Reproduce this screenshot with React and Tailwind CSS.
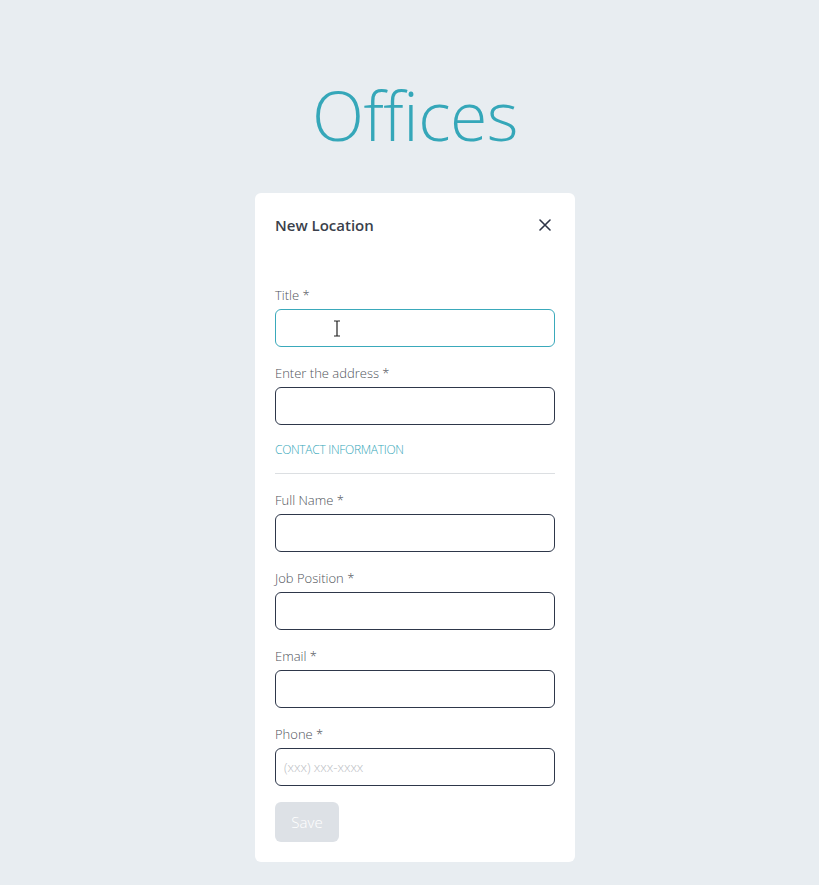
import React from 'react'

const font = { fontFamily: '"Open Sans", "Segoe UI", sans-serif' }

const Field = ({ label, placeholder, focused, children }) => (
  <div className="mb-[17px]">
    <label className="block text-[13px] leading-[18px] font-light text-[#4f535a] mb-[5px]">{label}</label>
    <div className="relative">
      <input
        type="text"
        placeholder={placeholder}
        className={`w-full h-[38px] rounded-[6px] border bg-white px-2 text-[13px] font-light text-[#333] placeholder:text-[#b9bcc2] outline-none ${
          focused ? 'border-[#3aa9bb]' : 'border-[#2e374a]'
        }`}
      />
      {children}
    </div>
  </div>
)

const App = () => {
  return (
    <div className="min-h-[885px] bg-[#e8edf1] flex flex-col items-center pl-[11px]" style={font}>
      <h1 className="mt-[70px] text-[68px] leading-[90px] font-light text-[#35a7b9] tracking-[-0.5px]">Offices</h1>
      <div className="mt-[33px] w-[320px] bg-white rounded-[6px] px-5 pt-5 pb-5">
        <div className="flex items-center justify-between h-6">
          <h2 className="text-[15px] font-semibold text-[#3a3f4b]">New Location</h2>
          <button className="w-5 h-5 flex items-center justify-center text-[#2e3548]">
            <svg width="12" height="12" viewBox="0 0 12 12" fill="none" stroke="currentColor" strokeWidth="1.6" strokeLinecap="round">
              <path d="M1 1L11 11M11 1L1 11" />
            </svg>
          </button>
        </div>
        <div className="h-[49px]" />
        <Field label="Title *" focused>
          <svg className="absolute left-[58px] top-[11px]" width="8" height="17" viewBox="0 0 8 17" fill="none" stroke="#222" strokeWidth="1.2">
            <path d="M1 1H3.2C3.6 1 4 1.4 4 1.8V15.2C4 15.6 4.4 16 4.8 16H7M7 1H4.8C4.4 1 4 1.4 4 1.8M4 15.2C4 15.6 3.6 16 3.2 16H1" />
          </svg>
        </Field>
        <Field label="Enter the address *" />
        <div>
          <div className="text-[12px] leading-4 font-light text-[#35a7b9] uppercase tracking-[-0.3px]">Contact Information</div>
          <div className="mt-[15px] mb-[17px] border-t border-[#dcdfe2]" />
        </div>
        <Field label="Full Name *" />
        <Field label="Job Position *" />
        <Field label="Email *" />
        <Field label="Phone *" placeholder="(xxx) xxx-xxxx" />
        <button className="-mt-px w-16 h-10 rounded-[6px] bg-[#dde1e6] text-white text-[15px] font-light" disabled>
          Save
        </button>
      </div>
    </div>
  )
}

export default App
